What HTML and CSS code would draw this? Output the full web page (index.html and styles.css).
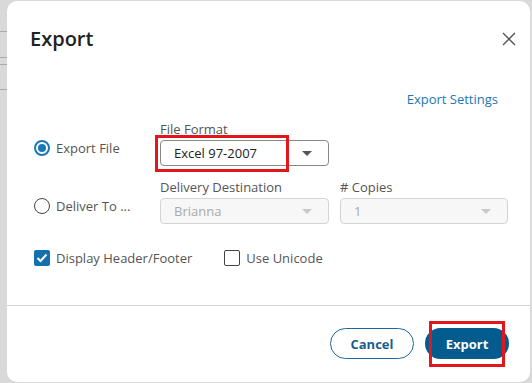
FILE: index.html
```html
<!DOCTYPE html>
<html lang="en">
<head>
    <meta charset="UTF-8">
    <title>Export</title>
    <link rel="stylesheet" href="styles.css">
</head>
<body>
<div class="backdrop">
    <div class="dialog">
        <div class="dialog-header">
            <h1>Export</h1>
            <button class="close" type="button">
                <svg width="14" height="14" viewBox="0 0 14 14"><path d="M1 1 L13 13 M13 1 L1 13" stroke="#555" stroke-width="1.4" fill="none"/></svg>
            </button>
        </div>
        <div class="dialog-body">
            <div class="settings-link"><a href="#">Export Settings</a></div>
            <div class="form-grid">
                <div></div>
                <label class="field-label">File Format</label>
                <div></div>

                <label class="radio checked"><span class="radio-dot"></span>Export File</label>
                <div class="select-wrap">
                    <div class="select">Excel 97-2007<span class="caret"></span></div>
                    <div class="highlight hl-format"></div>
                </div>
                <div></div>

                <div></div>
                <label class="field-label">Delivery Destination</label>
                <label class="field-label"># Copies</label>

                <label class="radio"><span class="radio-dot"></span>Deliver To ...</label>
                <div class="select disabled">Brianna<span class="caret"></span></div>
                <div class="select disabled">1<span class="caret"></span></div>
            </div>
            <div class="checks">
                <label class="check checked"><span class="box">
                    <svg width="12" height="10" viewBox="0 0 12 10"><path d="M1.5 5 L4.5 8 L10.5 1.5" stroke="#fff" stroke-width="2" fill="none"/></svg>
                </span>Display Header/Footer</label>
                <label class="check"><span class="box"></span>Use Unicode</label>
            </div>
        </div>
        <div class="dialog-footer">
            <button class="btn btn-outline" type="button">Cancel</button>
            <div class="btn-wrap">
                <button class="btn btn-primary" type="button">Export</button>
                <div class="highlight hl-export"></div>
            </div>
        </div>
    </div>
</div>
</body>
</html>
```

FILE: styles.css
```css
* {
    padding: 0;
    margin: 0;
    box-sizing: border-box;
}
body {
    font-family: "Open Sans", "Noto Sans", sans-serif;
    background-color: #d9d9d9;
}
.backdrop {
    width: 532px;
    height: 383px;
    padding: 1px 0 0 7px;
    background-color: #d9d9d9;
    background-image:
        linear-gradient(#a9a9a9, #a9a9a9),
        linear-gradient(#a9a9a9, #a9a9a9),
        linear-gradient(#a9a9a9, #a9a9a9),
        linear-gradient(#a9a9a9, #a9a9a9);
    background-size: 7px 1px;
    background-repeat: no-repeat;
    background-position: 0 31px, 0 57px, 0 64px, 0 89px;
}
.dialog {
    width: 523px;
    height: 381px;
    background-color: white;
    border-radius: 10px;
    display: flex;
    flex-direction: column;
}
.dialog-header {
    display: flex;
    align-items: center;
    justify-content: space-between;
    padding: 23px 14px 0 23px;
    height: 52px;
}
.dialog-header h1 {
    font-size: 20px;
    font-weight: 600;
    color: #222;
    line-height: 28px;
}
.close {
    border: none;
    background: none;
    width: 14px;
    height: 14px;
    display: flex;
}
.dialog-body {
    padding: 0 22px 0 27px;
    height: 253px;
    border-bottom: 1px solid #d6d6d6;
}
.settings-link {
    text-align: right;
    margin-top: 37px;
    padding-right: 10px;
    font-size: 13px;
    line-height: 18px;
}
.settings-link a {
    text-decoration: none;
    color: #1a78b8;
}
.form-grid {
    display: grid;
    grid-template-columns: 115px 169px 168px;
    column-gap: 11px;
    margin-top: 10px;
    font-size: 13px;
    color: #555;
}
.field-label {
    line-height: 18px;
    height: 22px;
    padding-top: 2px;
}
.form-grid .field-label:nth-child(8),
.form-grid .field-label:nth-child(9) {
    margin-top: 10px;
}
.radio {
    display: flex;
    align-items: center;
    gap: 6px;
    height: 26px;
    margin-top: -5px;
}
.radio-dot {
    width: 16px;
    height: 16px;
    border-radius: 50%;
    border: 1.5px solid #444;
    display: flex;
    align-items: center;
    justify-content: center;
}
.radio.checked .radio-dot {
    border: 2px solid #1a78b8;
}
.radio.checked .radio-dot::after {
    content: "";
    width: 8px;
    height: 8px;
    border-radius: 50%;
    background-color: #1a78b8;
}
.select-wrap {
    position: relative;
}
.select {
    height: 26px;
    border: 1px solid #888;
    border-radius: 4px;
    display: flex;
    align-items: center;
    justify-content: space-between;
    padding: 0 16px 0 13px;
    color: #222;
    font-size: 13px;
}
.select.disabled {
    border-color: #d4d4d4;
    background-color: #f7f7f7;
    color: #aaa;
}
.caret {
    width: 0;
    height: 0;
    border-left: 5px solid transparent;
    border-right: 5px solid transparent;
    border-top: 5px solid #555;
}
.select.disabled .caret {
    border-top-color: #c8c8c8;
}
.highlight {
    position: absolute;
    border: 3px solid #e3161b;
}
.hl-format {
    left: -5px;
    top: -5px;
    width: 134px;
    height: 37px;
}
.checks {
    display: flex;
    gap: 32px;
    margin-top: 25px;
    font-size: 13px;
    color: #555;
}
.check {
    display: flex;
    align-items: center;
    gap: 6px;
    height: 18px;
}
.box {
    width: 16px;
    height: 16px;
    border: 1.5px solid #444;
    border-radius: 2px;
    display: flex;
    align-items: center;
    justify-content: center;
}
.check.checked .box {
    border: none;
    background-color: #1570b0;
}
.dialog-footer {
    display: flex;
    justify-content: flex-end;
    align-items: center;
    gap: 11px;
    padding: 0 21px 1px 0;
    flex: 1;
}
.btn {
    width: 84px;
    height: 31px;
    border-radius: 16px;
    font-family: "Open Sans", "Noto Sans", sans-serif;
    font-size: 13px;
    font-weight: 700;
    cursor: pointer;
}
.btn-outline {
    background-color: white;
    border: 1.5px solid #1a6a9c;
    color: #1a5f8c;
}
.btn-primary {
    background-color: #035b8e;
    border: none;
    color: white;
}
.btn-wrap {
    position: relative;
    display: flex;
}
.hl-export {
    left: 4px;
    top: -7px;
    width: 76px;
    height: 46px;
}
```
